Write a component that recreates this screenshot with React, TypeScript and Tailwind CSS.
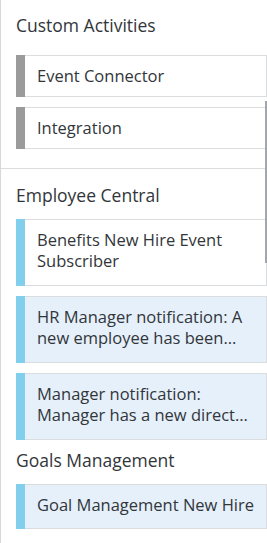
import React from "react";

type Item = { lines: string[]; kind: "gray" | "white" | "blue"; h: string };

function Card({ lines, kind, h, mt }: Item & { mt: string }) {
  const bg = kind === "blue" ? "bg-[#e5f0fa]" : "bg-white";
  const bar = kind === "gray" ? "bg-[#9b9b9b]" : "bg-[#81cfec]";
  return (
    <div className={`flex ${h} ${mt} ${bg} border-y border-r border-[#dadcde]`}>
      <div className={`w-[9px] shrink-0 -my-px ${bar}`} />
      <div className="pl-[12px] pt-[9px] text-[16.5px] leading-[21px] text-[#32363a]">
        {lines.map((l) => (
          <div key={l} className="whitespace-nowrap">{l}</div>
        ))}
      </div>
    </div>
  );
}

export default function App() {
  return (
    <div
      className="relative w-[267px] h-[543px] overflow-hidden bg-white border-l border-[#d5d7d9]"
      style={{ fontFamily: '"Open Sans", "Noto Sans", sans-serif' }}
    >
      <div className="pl-[15px] pt-[14px] pb-[19px]">
        <div className="h-[22px] leading-[22px] text-[17.5px] text-[#32363a]">Custom Activities</div>
        <Card lines={["Event Connector"]} kind="gray" h="h-[42px]" mt="mt-[19px]" />
        <Card lines={["Integration"]} kind="gray" h="h-[42px]" mt="mt-[10px]" />
      </div>
      <div className="border-t border-[#dadcde] pl-[15px] pt-[15px]">
        <div className="h-[22px] leading-[22px] text-[17.5px] text-[#32363a]">Employee Central</div>
        <Card lines={["Benefits New Hire Event", "Subscriber"]} kind="white" h="h-[67px]" mt="mt-[13px]" />
        <Card lines={["HR Manager notification: A", "new employee has been…"]} kind="blue" h="h-[67px]" mt="mt-[10px]" />
        <Card lines={["Manager notification:", "Manager has a new direct…"]} kind="blue" h="h-[67px]" mt="mt-[10px]" />
        <div className="mt-[9px] h-[22px] leading-[22px] text-[17.5px] text-[#32363a]">Goals Management</div>
        <Card lines={["Goal Management New Hire"]} kind="blue" h="h-[45px]" mt="mt-[13px]" />
      </div>
      <div className="absolute right-0 top-[101px] w-[2px] h-[162px] bg-[#a3a7ab]" />
    </div>
  );
}
